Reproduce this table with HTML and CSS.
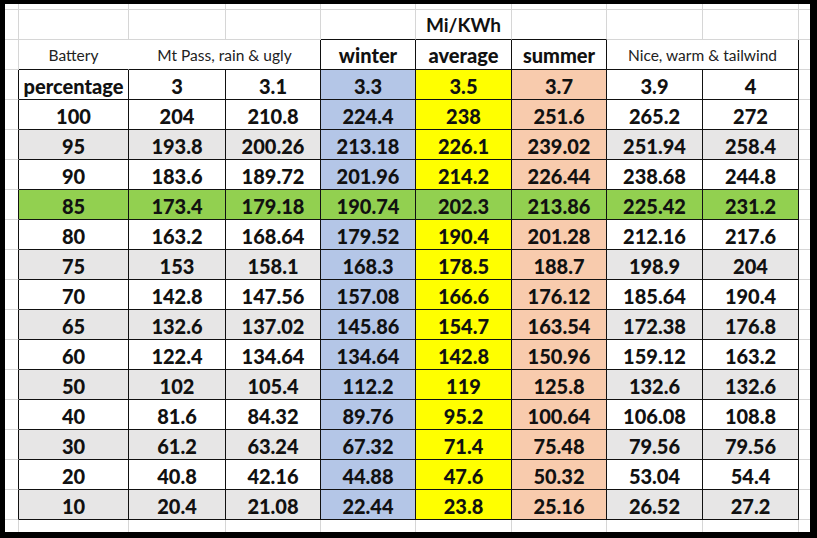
FILE: index.html
```html
<!DOCTYPE html>
<html>
<head>
<meta charset="utf-8">
<link rel="stylesheet" href="styles.css">
</head>
<body>
<div class="sheet">
<table class="grid">
<colgroup>
<col class="c0"><col class="c1"><col class="c2"><col class="c3"><col class="c4"><col class="c5"><col class="c6"><col class="c7"><col class="c8"><col class="c9">
</colgroup>
<tr class="r0"><td></td><td></td><td></td><td></td><td></td><td></td><td></td><td></td><td></td><td class="last"></td></tr>
<tr class="r1"><td></td><td></td><td></td><td></td><td class="bb"></td><td class="bb title">Mi/KWh</td><td class="bb"></td><td></td><td></td><td class="last"></td></tr>
<tr class="hdr"><td></td><td class="lbl bb nr">Battery</td><td class="lbl bb br" colspan="2">Mt Pass, rain &amp; ugly</td><td class="big bb br">winter</td><td class="big bb br">average</td><td class="big bb br">summer</td><td class="lbl bb br" colspan="2">Nice, warm &amp; tailwind</td><td class="last"></td></tr>
<tr class="row"><td class="edge"></td><td class="v">percentage</td><td class="v">3</td><td class="v">3.1</td><td class="v w">3.3</td><td class="v a">3.5</td><td class="v s">3.7</td><td class="v">3.9</td><td class="v">4</td><td class="last"></td></tr>
<tr class="row"><td class="edge"></td><td class="v">100</td><td class="v">204</td><td class="v">210.8</td><td class="v w">224.4</td><td class="v a">238</td><td class="v s">251.6</td><td class="v">265.2</td><td class="v">272</td><td class="last"></td></tr>
<tr class="row grey"><td class="edge"></td><td class="v">95</td><td class="v">193.8</td><td class="v">200.26</td><td class="v w">213.18</td><td class="v a">226.1</td><td class="v s">239.02</td><td class="v">251.94</td><td class="v">258.4</td><td class="last"></td></tr>
<tr class="row"><td class="edge"></td><td class="v">90</td><td class="v">183.6</td><td class="v">189.72</td><td class="v w">201.96</td><td class="v a">214.2</td><td class="v s">226.44</td><td class="v">238.68</td><td class="v">244.8</td><td class="last"></td></tr>
<tr class="row green"><td class="edge"></td><td class="v">85</td><td class="v">173.4</td><td class="v">179.18</td><td class="v w">190.74</td><td class="v a">202.3</td><td class="v s">213.86</td><td class="v">225.42</td><td class="v">231.2</td><td class="last"></td></tr>
<tr class="row"><td class="edge"></td><td class="v">80</td><td class="v">163.2</td><td class="v">168.64</td><td class="v w">179.52</td><td class="v a">190.4</td><td class="v s">201.28</td><td class="v">212.16</td><td class="v">217.6</td><td class="last"></td></tr>
<tr class="row grey"><td class="edge"></td><td class="v">75</td><td class="v">153</td><td class="v">158.1</td><td class="v w">168.3</td><td class="v a">178.5</td><td class="v s">188.7</td><td class="v">198.9</td><td class="v">204</td><td class="last"></td></tr>
<tr class="row"><td class="edge"></td><td class="v">70</td><td class="v">142.8</td><td class="v">147.56</td><td class="v w">157.08</td><td class="v a">166.6</td><td class="v s">176.12</td><td class="v">185.64</td><td class="v">190.4</td><td class="last"></td></tr>
<tr class="row grey"><td class="edge"></td><td class="v">65</td><td class="v">132.6</td><td class="v">137.02</td><td class="v w">145.86</td><td class="v a">154.7</td><td class="v s">163.54</td><td class="v">172.38</td><td class="v">176.8</td><td class="last"></td></tr>
<tr class="row"><td class="edge"></td><td class="v">60</td><td class="v">122.4</td><td class="v">134.64</td><td class="v w">134.64</td><td class="v a">142.8</td><td class="v s">150.96</td><td class="v">159.12</td><td class="v">163.2</td><td class="last"></td></tr>
<tr class="row grey"><td class="edge"></td><td class="v">50</td><td class="v">102</td><td class="v">105.4</td><td class="v w">112.2</td><td class="v a">119</td><td class="v s">125.8</td><td class="v">132.6</td><td class="v">132.6</td><td class="last"></td></tr>
<tr class="row"><td class="edge"></td><td class="v">40</td><td class="v">81.6</td><td class="v">84.32</td><td class="v w">89.76</td><td class="v a">95.2</td><td class="v s">100.64</td><td class="v">106.08</td><td class="v">108.8</td><td class="last"></td></tr>
<tr class="row grey"><td class="edge"></td><td class="v">30</td><td class="v">61.2</td><td class="v">63.24</td><td class="v w">67.32</td><td class="v a">71.4</td><td class="v s">75.48</td><td class="v">79.56</td><td class="v">79.56</td><td class="last"></td></tr>
<tr class="row"><td class="edge"></td><td class="v">20</td><td class="v">40.8</td><td class="v">42.16</td><td class="v w">44.88</td><td class="v a">47.6</td><td class="v s">50.32</td><td class="v">53.04</td><td class="v">54.4</td><td class="last"></td></tr>
<tr class="row grey"><td class="edge"></td><td class="v">10</td><td class="v">20.4</td><td class="v">21.08</td><td class="v w">22.44</td><td class="v a">23.8</td><td class="v s">25.16</td><td class="v">26.52</td><td class="v">27.2</td><td class="last"></td></tr>
<tr class="rz"><td></td><td></td><td></td><td></td><td></td><td></td><td></td><td></td><td></td><td class="last"></td></tr>
</table>
</div>
</body>
</html>
```
FILE: styles.css
```css
html, body {
  margin: 0;
  padding: 0;
  background: #000;
}
body {
  width: 817px;
  height: 538px;
  overflow: hidden;
}
.sheet {
  margin: 4px 7px 6px 5px;
  width: 805px;
  height: 528px;
  background: #fff;
  overflow: hidden;
}
.grid {
  border-collapse: separate;
  border-spacing: 0;
  table-layout: fixed;
  width: 805px;
  font-family: Lato, "Liberation Sans", sans-serif;
  color: #111;
}
.c0 { width: 14px; }
.c1 { width: 110px; }
.c2 { width: 97px; }
.c3 { width: 95px; }
.c4 { width: 95px; }
.c5 { width: 96px; }
.c6 { width: 95px; }
.c7 { width: 96px; }
.c8 { width: 96px; }
.c9 { width: 11px; }

.grid td {
  padding: 0;
  box-sizing: border-box;
  border-right: 1px solid #d6d6d6;
  border-bottom: 1px solid #d6d6d6;
  text-align: center;
  vertical-align: middle;
  white-space: nowrap;
  overflow: hidden;
}
.grid td.last { border-right: none; }

.r0 td { height: 6px; }
.r1 td { height: 30px; }
.hdr td { height: 30px; }
.row td { height: 30px; }
.rz td { height: 12px; border-bottom: none; }

.grid td.bb { border-bottom: 1px solid #111; }
.grid td.br { border-right: 1px solid #111; }
.grid td.nr { border-right-color: transparent; }
.grid td.edge { border-right: 1px solid #111; }

.title {
  text-align: left;
  padding-left: 4px;
  font-weight: 700;
  font-size: 19px;
  padding-top: 4px;
}
.lbl {
  font-size: 15.5px;
  font-weight: 400;
  padding-top: 3px;
  color: #222;
}
.big {
  font-size: 20px;
  font-weight: 900;
  padding-top: 2px;
}
.grid td.v {
  border-right: 1px solid #111;
  border-bottom: 1px solid #111;
  font-size: 20px;
  font-weight: 900;
  padding-top: 3px;
}
.row td.v.w { background: #b4c6e7; }
.row td.v.a { background: #ffff00; }
.row td.v.s { background: #f8cbad; }
.grey td.v { background: #e7e6e6; }
.green td.v,
.green td.v.w,
.green td.v.a,
.green td.v.s { background: #92d050; }
```
